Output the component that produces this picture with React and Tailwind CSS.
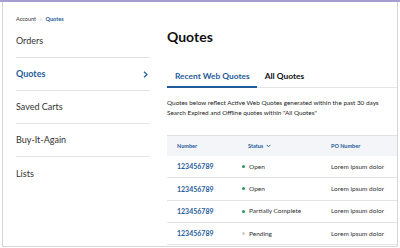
import React from "react";

const rows = [
  { n: "123456789", s: "Open", dot: "bg-[#2b9467]" },
  { n: "123456789", s: "Open", dot: "bg-[#2b9467]" },
  { n: "123456789", s: "Partially Complete", dot: "bg-[#2b9467]" },
  { n: "123456789", s: "Pending", dot: "bg-[#cfcfcf]" },
];

const nav = ["Orders", "Quotes", "Saved Carts", "Buy-It-Again", "Lists"];

export default function App() {
  return (
    <div
      className="w-[400px] h-[248px] bg-white overflow-hidden border-t-2 border-[#a49dd0]"
      style={{ fontFamily: "Lato, 'Open Sans', sans-serif" }}
    >
      <div className="ml-[2px] mr-[2px] h-[245px] border-l border-r border-b border-[#d6d6d6] flex">
        <aside className="w-[147px] shrink-0 pl-[13px]">
          <div className="pt-[13px] h-[23px] flex items-start text-[5.5px] leading-[8px] gap-[4px]">
            <span className="text-[#333]">Account</span>
            <span className="text-[#999]">›</span>
            <span className="text-[#1f5c99] font-bold">Quotes</span>
          </div>
          {nav.map((item, i) => (
            <div
              key={item}
              className={`h-[33px] flex items-center justify-between ${
                i < nav.length - 1 ? "border-b border-[#e4e4e4]" : ""
              }`}
            >
              <span
                className={`text-[9px] ${
                  item === "Quotes" ? "text-[#1f5c99] font-bold" : "text-[#333]"
                }`}
              >
                {item}
              </span>
              {item === "Quotes" && (
                <svg width="5" height="7" viewBox="0 0 5 7" className="mr-[2px]">
                  <path d="M1 0.8 L4 3.5 L1 6.2" fill="none" stroke="#1f5c99" strokeWidth="1.2" />
                </svg>
              )}
            </div>
          ))}
        </aside>
        <main className="flex-1 ml-[17px] flex flex-col">
          <h1 className="mt-[26px] text-[14px] leading-[18px] font-bold text-[#111]">Quotes</h1>
          <div className="mt-[20px] flex border-b border-[#e6e6e6] h-[22px] items-stretch">
            <div className="pl-[8px] pr-[7px] border-b-2 border-[#1f5c99] -mb-px flex items-center text-[8.4px] font-bold text-[#1f5c99]">
              Recent Web Quotes
            </div>
            <div className="ml-[8px] flex items-center text-[8.4px] font-bold text-[#111]">
              All Quotes
            </div>
          </div>
          <div className="mt-[10px] text-[6.4px] leading-[10px] text-[#222]">
            <div>Quotes below reflect Active Web Quotes generated within the past 30 days</div>
            <div>Search Expired and Offline quotes within "All Quotes"</div>
          </div>
          <div className="mt-[17px]">
            <div className="h-[21px] bg-[#f3f5f8] border-t border-[#e2e2e2] grid grid-cols-[75px_89px_1fr] items-center text-[5.5px] font-bold text-[#1f5c99]">
              <div className="pl-[10px]">Number</div>
              <div className="pl-[6px] flex items-center gap-[3px]">
                Status
                <svg width="5" height="4" viewBox="0 0 5 4">
                  <path d="M0.7 0.9 L2.5 2.8 L4.3 0.9" fill="none" stroke="#1f5c99" strokeWidth="0.9" />
                </svg>
              </div>
              <div>PO Number</div>
            </div>
            {rows.map((r, i) => (
              <div
                key={i}
                className="h-[22.3px] border-b border-[#e4e4e4] grid grid-cols-[75px_89px_1fr] items-center text-[6.5px] text-[#333]"
              >
                <div className="pl-[10px] font-bold text-[#1f5c99] text-[7px]">{r.n}</div>
                <div className="flex items-center gap-[4px]">
                  <span className={`w-[3px] h-[3px] rounded-full ${r.dot}`} />
                  <span>{r.s}</span>
                </div>
                <div>Lorem ipsum dolor</div>
              </div>
            ))}
          </div>
        </main>
      </div>
    </div>
  );
}
